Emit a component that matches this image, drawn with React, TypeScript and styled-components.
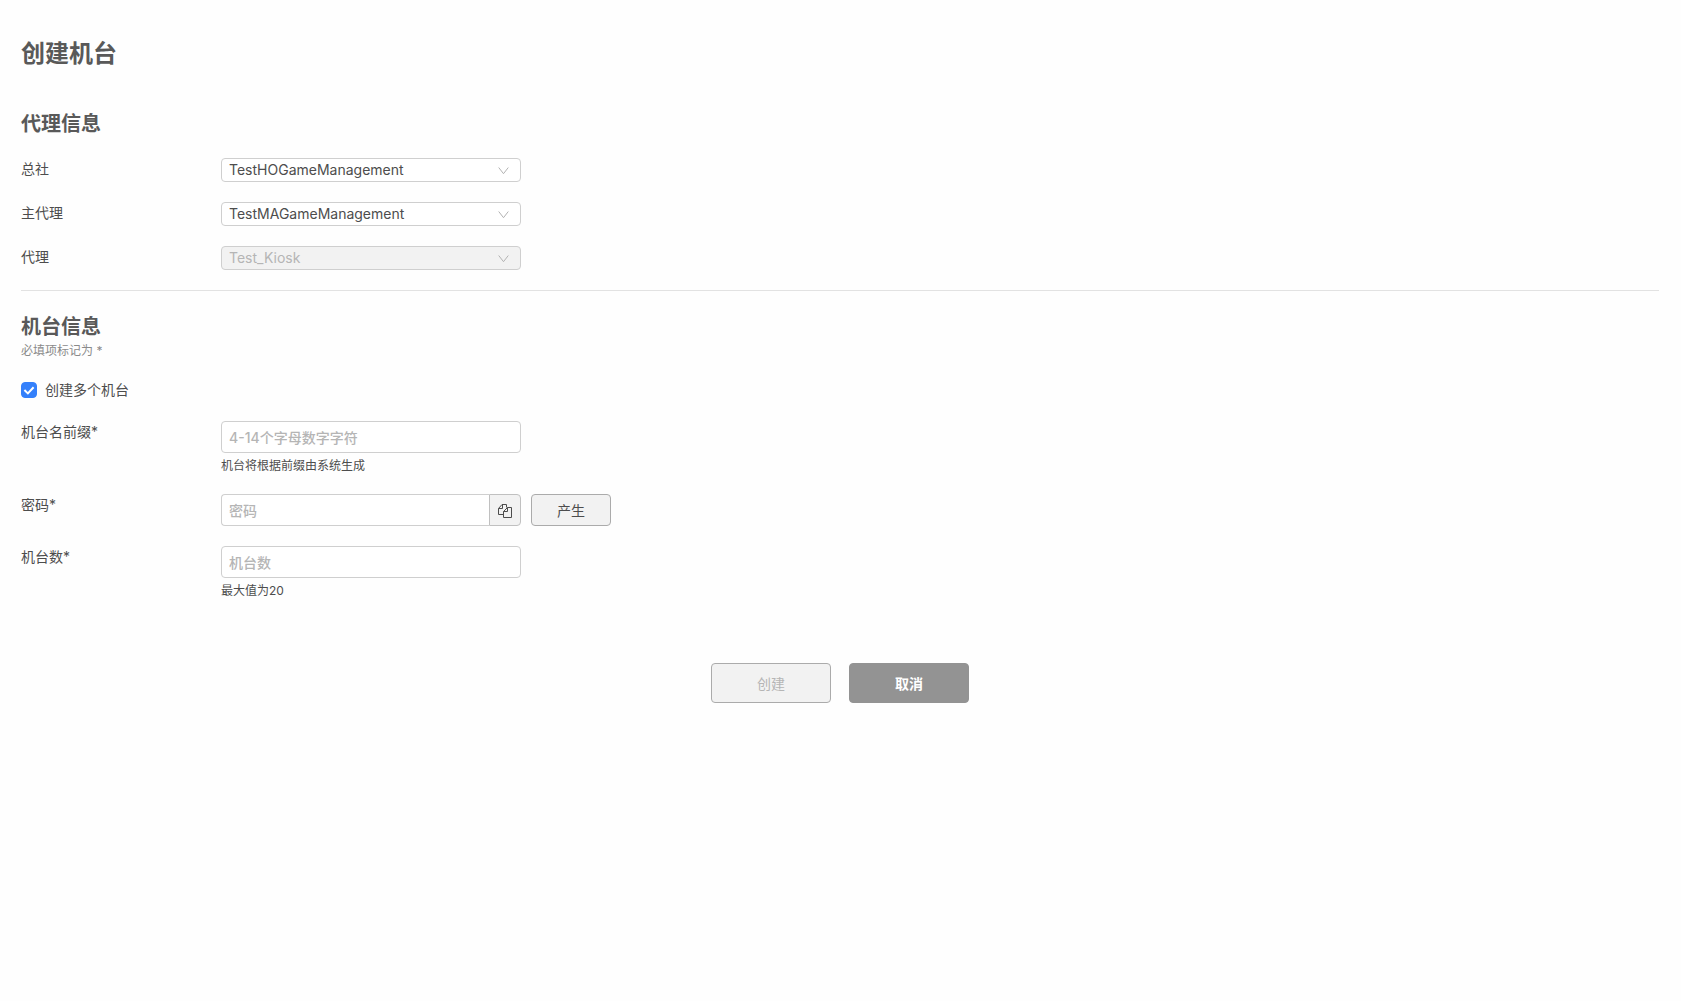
import { useState } from "react";
import type { ReactNode } from "react";
import styled, { createGlobalStyle } from "styled-components";

const GlobalStyle = createGlobalStyle`
  *, *::before, *::after { box-sizing: border-box; }
  body {
    margin: 0;
    background: #fefefe;
    color: #4d4d4d;
    font: 14px/22px Inter, "Noto Sans CJK SC", sans-serif;
  }
  button, input, select { font: inherit; color: inherit; margin: 0; }
`;

const Page = styled.main`
  padding: 36px 22px 36px 21px;
`;

const Title = styled.h1`
  margin: 0 0 36px;
  font-size: 24px;
  line-height: 36px;
  font-weight: 700;
  color: #595959;
`;

const SectionTitle = styled.h2`
  margin: 0;
  font-size: 20px;
  line-height: 32px;
  font-weight: 700;
  color: #595959;
`;

const Rows = styled.div<{ $top: number }>`
  display: flex;
  flex-direction: column;
  gap: 20px;
  margin-top: ${(p) => p.$top}px;
`;

const Row = styled.div`
  display: grid;
  grid-template-columns: 200px minmax(0, 1fr);
  align-items: start;
`;

const Label = styled.label`
  line-height: 22px;
`;

const Controls = styled.div`
  display: flex;
  gap: 10px;
`;

const SelectBox = styled.div`
  position: relative;
  width: 300px;
`;

const Select = styled.select`
  display: block;
  width: 100%;
  height: 24px;
  padding: 0 32px 0 7px;
  border: 1px solid #cfcfcf;
  border-radius: 4px;
  background: #fff;
  appearance: none;
  line-height: 22px;
  color: #4d4d4d;

  &:disabled {
    background: #f2f2f2;
    color: #b5b5b5;
    opacity: 1;
  }
`;

const Chevron = styled.svg`
  position: absolute;
  top: 9px;
  right: 12px;
  pointer-events: none;
`;

const Divider = styled.hr`
  height: 1px;
  margin: 20px 0;
  border: 0;
  background: #e2e2e2;
`;

const Note = styled.p`
  margin: 0;
  font-size: 12px;
  line-height: 16px;
  color: #8a8a8a;
`;

const CheckLabel = styled.label`
  display: flex;
  width: max-content;
  align-items: center;
  gap: 8px;
  margin-top: 20px;
`;

const CheckBox = styled.span`
  position: relative;
  display: flex;
  width: 16px;
  height: 16px;
`;

const CheckInput = styled.input`
  width: 16px;
  height: 16px;
  border: 1px solid #cfcfcf;
  border-radius: 4px;
  background: #fff;
  appearance: none;

  &:checked { border-color: #3480fb; background: #3480fb; }
`;

const CheckMark = styled.svg`
  position: absolute;
  inset: 0;
  pointer-events: none;
`;

const TextInput = styled.input<{ $joined?: boolean }>`
  display: block;
  width: ${(p) => (p.$joined ? "268px" : "300px")};
  height: 32px;
  padding: 0 7px;
  border: 1px solid #cfcfcf;
  border-right-width: ${(p) => (p.$joined ? "0" : "1px")};
  border-radius: ${(p) => (p.$joined ? "4px 0 0 4px" : "4px")};
  background: #fff;

  &::placeholder { color: #b5b5b5; font-weight: 500; opacity: 1; }
`;

const InputGroup = styled.div`
  display: flex;
  width: 300px;
`;

const CopyButton = styled.button`
  display: flex;
  width: 32px;
  height: 32px;
  padding: 2px 0 0;
  align-items: center;
  justify-content: center;
  border: 1px solid #c0c0c0;
  border-radius: 0 4px 4px 0;
  background: #f2f2f2;
`;

const Hint = styled.p`
  margin: 5px 0 0;
  font-size: 12px;
  line-height: 16px;
`;

const Button = styled.button<{ $size: "small" | "large"; $solid?: boolean }>`
  width: ${(p) => (p.$size === "large" ? 120 : 80)}px;
  height: ${(p) => (p.$size === "large" ? 40 : 32)}px;
  padding: 2px 0 0;
  border: 1px solid ${(p) => (p.$solid ? "#939393" : "#ababab")};
  border-radius: 4px;
  background: ${(p) => (p.$solid ? "#939393" : "#f2f2f2")};
  color: ${(p) => (p.$solid ? "#fff" : "#4d4d4d")};
  font-weight: ${(p) => (p.$solid ? 600 : 400)};

  &:disabled { color: #b5b5b5; }
`;

const Actions = styled.div`
  display: flex;
  justify-content: center;
  gap: 18px;
  margin-top: 64px;
`;

function SelectField({ id, label, value, disabled }: { id: string; label: string; value: string; disabled?: boolean }) {
  return (
    <Row>
      <Label htmlFor={id}>{label}</Label>
      <SelectBox>
        <Select id={id} disabled={disabled}>
          <option>{value}</option>
        </Select>
        <Chevron width="11" height="8" viewBox="0 0 11 8" fill="none" stroke="#b3b3b3">
          <path d="M.7.5 5.5 6.7 10.3.5" />
        </Chevron>
      </SelectBox>
    </Row>
  );
}

function Field({ id, label, hint, children }: { id: string; label: string; hint?: string; children: ReactNode }) {
  return (
    <Row>
      <Label htmlFor={id}>{label}</Label>
      <div>
        <Controls>{children}</Controls>
        {hint && <Hint>{hint}</Hint>}
      </div>
    </Row>
  );
}

export default function App() {
  const [multiple, setMultiple] = useState(true);

  return (
    <Page>
      <GlobalStyle />
      <Title>创建机台</Title>

      <SectionTitle>代理信息</SectionTitle>
      <Rows $top={18}>
        <SelectField id="head-office" label="总社" value="TestHOGameManagement" />
        <SelectField id="master-agent" label="主代理" value="TestMAGameManagement" />
        <SelectField id="agent" label="代理" value="Test_Kiosk" disabled />
      </Rows>

      <Divider />

      <SectionTitle>机台信息</SectionTitle>
      <Note>必填项标记为 *</Note>
      <CheckLabel>
        <CheckBox>
          <CheckInput type="checkbox" checked={multiple} onChange={(e) => setMultiple(e.target.checked)} />
          {multiple && (
            <CheckMark width="16" height="16" viewBox="0 0 16 16" fill="none" stroke="#fff" strokeWidth="2">
              <path d="M3.4 8 6.9 11.4 12.6 5.3" />
            </CheckMark>
          )}
        </CheckBox>
        创建多个机台
      </CheckLabel>

      <Rows $top={20}>
        <Field id="prefix" label="机台名前缀*" hint="机台将根据前缀由系统生成">
          <TextInput id="prefix" placeholder="4-14个字母数字字符" />
        </Field>
        <Field id="password" label="密码*">
          <InputGroup>
            <TextInput id="password" placeholder="密码" $joined />
            <CopyButton type="button" aria-label="复制">
              <svg width="14" height="14" viewBox="0 0 14 14" fill="none" stroke="#4d4d4d" strokeLinejoin="round">
                <path d="M5.5 10.5H.5V4.5L4 .5H8.500V3.500M4.500.5V4.500H.5" />
                <path d="M5.500 13.500V7.500L9.500 3.500H13.500V13.500ZM9.500 3.500V7.500H5.500" />
              </svg>
            </CopyButton>
          </InputGroup>
          <Button type="button" $size="small">产生</Button>
        </Field>
        <Field id="count" label="机台数*" hint="最大值为20">
          <TextInput id="count" placeholder="机台数" />
        </Field>
      </Rows>

      <Actions>
        <Button type="button" $size="large" disabled>创建</Button>
        <Button type="button" $size="large" $solid>取消</Button>
      </Actions>
    </Page>
  );
}
